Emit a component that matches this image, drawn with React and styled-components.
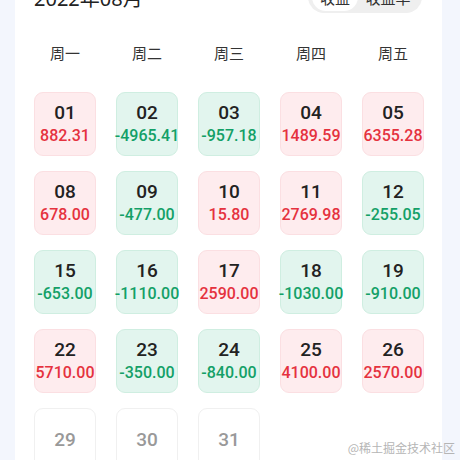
import React from 'react'
import styled, { createGlobalStyle } from 'styled-components'

const GlobalStyle = createGlobalStyle`
  html, body {
    margin: 0;
    padding: 0;
    background: #f3f6fd;
    overflow: hidden;
  }
  body {
    font-family: "Noto Sans", "Noto Sans CJK SC", sans-serif;
  }
`

const Page = styled.div`
  width: 460px;
  height: 460px;
  overflow: hidden;
  position: relative;
`

const Card = styled.div`
  margin: -20px 0 0 15px;
  width: 427px;
  box-sizing: border-box;
  background: #fff;
  padding: 0 18px 0 19px;
`

const Header = styled.div`
  height: 34px;
  display: flex;
  align-items: center;
  justify-content: space-between;
`

const Title = styled.div`
  display: flex;
  align-items: center;
  gap: 10px;
  font-size: 20px;
  color: #222;
`

const Caret = styled.span`
  width: 0;
  height: 0;
  border-left: 4px solid transparent;
  border-right: 4px solid transparent;
  border-top: 5px solid #c8c8c8;
`

const Toggle = styled.div`
  display: flex;
  align-items: center;
  height: 32px;
  padding: 0 4px;
  border-radius: 16px;
  background: #efefef;
  margin-right: 2px;
`

const ToggleItem = styled.div`
  height: 28px;
  width: ${(p) => (p.$active ? '46px' : '60px')};
  border-radius: 14px;
  display: flex;
  align-items: center;
  justify-content: center;
  font-size: 15px;
  color: #333;
  background: ${(p) => (p.$active ? '#fff' : 'transparent')};
`

const Weekdays = styled.div`
  margin-top: 18px;
  display: grid;
  grid-template-columns: repeat(5, 62px);
  column-gap: 20px;
  height: 40px;
  align-items: center;
`

const Weekday = styled.div`
  text-align: center;
  font-size: 15px;
  color: #333;
`

const Grid = styled.div`
  margin-top: 20px;
  display: grid;
  grid-template-columns: repeat(5, 62px);
  column-gap: 20px;
  row-gap: 15px;
`

const tones = {
  up: { bg: '#feecee', border: '#fbdfe2', text: '#e5323e' },
  down: { bg: '#e2f5ee', border: '#cfeee1', text: '#13a067' },
  none: { bg: '#fff', border: '#f0f0f0', text: '#999' },
}

const Cell = styled.div`
  height: 64px;
  box-sizing: border-box;
  border-radius: 9px;
  border: 1px solid ${(p) => tones[p.$tone].border};
  background: ${(p) => tones[p.$tone].bg};
  display: flex;
  flex-direction: column;
  align-items: center;
  justify-content: center;
  font-family: Roboto, "Noto Sans", sans-serif;
  white-space: nowrap;
`

const Day = styled.div`
  font-size: 19px;
  font-weight: 500;
  line-height: 22px;
  color: ${(p) => (p.$muted ? '#999' : '#222')};
`

const Value = styled.div`
  margin-top: 2px;
  font-size: 16px;
  font-weight: 500;
  line-height: 20px;
  color: ${(p) => tones[p.$tone].text};
`

const Watermark = styled.div`
  position: absolute;
  right: 5px;
  bottom: 4px;
  font-size: 12px;
  color: #b5b5b5;
  font-family: "Noto Sans CJK SC", sans-serif;
`

const days = [
  ['01', '882.31'], ['02', '-4965.41'], ['03', '-957.18'], ['04', '1489.59'], ['05', '6355.28'],
  ['08', '678.00'], ['09', '-477.00'], ['10', '15.80'], ['11', '2769.98'], ['12', '-255.05'],
  ['15', '-653.00'], ['16', '-1110.00'], ['17', '2590.00'], ['18', '-1030.00'], ['19', '-910.00'],
  ['22', '5710.00'], ['23', '-350.00'], ['24', '-840.00'], ['25', '4100.00'], ['26', '2570.00'],
  ['29'], ['30'], ['31'],
]

const App = () => {
  return (
    <Page>
      <GlobalStyle />
      <Card>
        <Header>
          <Title>
            2022年08月
            <Caret />
          </Title>
          <Toggle>
            <ToggleItem $active>收益</ToggleItem>
            <ToggleItem>收益率</ToggleItem>
          </Toggle>
        </Header>
        <Weekdays>
          {['周一', '周二', '周三', '周四', '周五'].map((w) => (
            <Weekday key={w}>{w}</Weekday>
          ))}
        </Weekdays>
        <Grid>
          {days.map(([d, v]) => {
            const tone = v === undefined ? 'none' : v.startsWith('-') ? 'down' : 'up'
            return (
              <Cell key={d} $tone={tone}>
                <Day $muted={tone === 'none'}>{d}</Day>
                {v && <Value $tone={tone}>{v}</Value>}
              </Cell>
            )
          })}
        </Grid>
      </Card>
      <Watermark>@稀土掘金技术社区</Watermark>
    </Page>
  )
}

export default App
